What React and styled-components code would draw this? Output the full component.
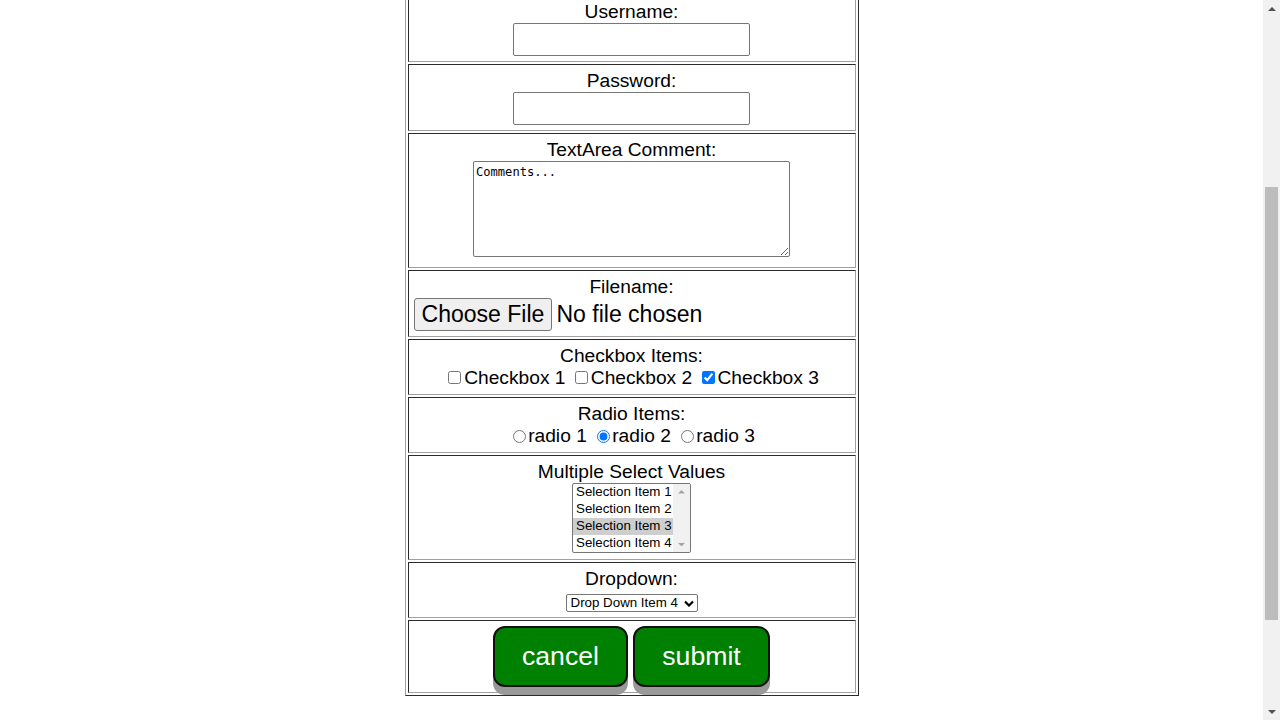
import React from "react";
import styled, { createGlobalStyle } from "styled-components";

const Global = createGlobalStyle`
  html, body { margin: 0; padding: 0; overflow: hidden; background: #fff; }
  body { font-family: "Liberation Sans", Arial, sans-serif; color: #000; }
`;

const Screen = styled.div`
  display: flex;
  width: 1280px;
  height: 720px;
  overflow: hidden;
`;

const Main = styled.main`
  flex: 1;
  overflow: hidden;
`;

const Table = styled.table`
  width: 454px;
  margin: -8px auto 0;
  border-spacing: 2px;
  border-style: solid;
  border-width: 1px;
  border-color: #a0a0a0 #2b2b2b #2b2b2b #a0a0a0;
  font-size: 19.2px;
`;

const Cell = styled.td`
  padding: 5px;
  text-align: center;
  border-style: solid;
  border-width: 1px;
  border-color: #2b2b2b #a0a0a0 #a0a0a0 #2b2b2b;
  line-height: 22px;
`;

const Label = styled.div`
  height: 22px;
  line-height: 22px;
`;

const FieldRow = styled.div`
  display: flex;
  justify-content: ${(p) => p.$align || "center"};
  align-items: ${(p) => p.$items || "flex-start"};
  gap: ${(p) => p.$gap || 0}px;
  padding-bottom: ${(p) => p.$pb || 0}px;
  height: ${(p) => (p.$h ? `${p.$h}px` : "auto")};
`;

const TextInput = styled.input`
  box-sizing: border-box;
  width: 237px;
  height: 33px;
  border: 1px solid #767676;
  border-radius: 2px;
  padding: 1px 2px;
  font-family: "Liberation Sans", Arial, sans-serif;
  font-size: 23px;
  background: #fff;
  outline: none;
`;

const TextArea = styled.textarea`
  box-sizing: border-box;
  width: 317px;
  height: 96px;
  border: 1px solid #767676;
  border-radius: 2px;
  padding: 3px 2px 2px;
  font-family: "DejaVu Sans Mono", monospace;
  font-size: 12.1px;
  line-height: 15px;
  color: #000;
  margin: 0;
  outline: none;
`;

const FileButton = styled.button`
  box-sizing: border-box;
  height: 33px;
  padding: 0 7px;
  margin: 0 4px 0 0;
  border: 1px solid #767676;
  border-radius: 3px;
  background: #efefef;
  color: #000;
  font-family: "Liberation Sans", Arial, sans-serif;
  font-size: 23.04px;
  line-height: 31px;
`;

const FileText = styled.span`
  font-size: 23.04px;
  line-height: 33px;
`;

const ChoiceLine = styled.div`
  height: 22px;
  line-height: 22px;
  white-space: nowrap;
`;

const Check = styled.input`
  width: 13px;
  height: 13px;
  margin: ${(p) => (p.type === "radio" ? "0 2px 0 5px" : "0 3px 0 4px")};
  vertical-align: ${(p) => (p.type === "radio" ? "-1px" : "0")};
  accent-color: #0075ff;
`;

const ListBox = styled.div`
  box-sizing: border-box;
  width: 119px;
  height: 70px;
  margin-bottom: 1px;
  border: 1px solid #767676;
  border-radius: 2px;
  display: flex;
  overflow: hidden;
  background: #fff;
`;

const Options = styled.div`
  flex: 1;
  display: flex;
  flex-direction: column;
  text-align: left;
`;

const Option = styled.div`
  height: 17px;
  line-height: 16px;
  padding-left: 3px;
  font-size: 13.33px;
  white-space: nowrap;
  background: ${(p) => (p.$selected ? "#cecece" : "transparent")};
`;

const MiniBar = styled.div`
  width: 17px;
  background: #f1f1f1;
  display: flex;
  flex-direction: column;
  justify-content: space-between;
  align-items: center;
  padding: 6px 0;
`;

const DropBox = styled.div`
  box-sizing: border-box;
  width: 132px;
  height: 18px;
  border: 1px solid #767676;
  border-radius: 2px;
  display: flex;
  align-items: center;
  justify-content: space-between;
  padding: 0 3px 0 4px;
  font-size: 13.33px;
  line-height: 16px;
  background: #fff;
`;

const ActionButton = styled.button`
  box-sizing: border-box;
  height: 61px;
  width: ${(p) => p.$w}px;
  padding: 0;
  background: #008000;
  color: #fff;
  border: 2px solid #111;
  border-radius: 12px;
  font-family: "Liberation Sans", Arial, sans-serif;
  font-size: 26.67px;
  box-shadow: 0 8px #999;
  cursor: pointer;
`;

const ScrollBar = styled.aside`
  width: 17px;
  background: #f1f1f1;
  display: flex;
  flex-direction: column;
`;

const ArrowBox = styled.div`
  height: 17px;
  display: flex;
  align-items: center;
  justify-content: center;
`;

const Track = styled.div`
  flex: 1;
  display: flex;
  flex-direction: column;
  align-items: center;
`;

const Thumb = styled.div`
  width: 13px;
  background: #bcbcbc;
  margin-top: ${(p) => p.$offset}px;
  height: ${(p) => p.$size}px;
`;

const Tri = ({ up, size = 8, color = "#505050" }) => (
  <svg width={size} height={size / 2} viewBox="0 0 8 4">
    {up ? <polygon points="0,4 8,4 4,0" fill={color} /> : <polygon points="0,0 8,0 4,4" fill={color} />}
  </svg>
);

const Chevron = () => (
  <svg width="10" height="7" viewBox="0 0 10 7">
    <polyline points="1,1.5 5,5.5 9,1.5" fill="none" stroke="#000" strokeWidth="2.2" />
  </svg>
);

export default function App() {
  return (
    <>
      <Global />
      <Screen>
        <Main>
          <form onSubmit={(e) => e.preventDefault()}>
            <Table>
              <tbody>
                <tr>
                  <Cell>
                    <Label>Username:</Label>
                    <FieldRow>
                      <TextInput type="text" name="username" />
                    </FieldRow>
                  </Cell>
                </tr>
                <tr>
                  <Cell>
                    <Label>Password:</Label>
                    <FieldRow>
                      <TextInput type="password" name="password" />
                    </FieldRow>
                  </Cell>
                </tr>
                <tr>
                  <Cell>
                    <Label>TextArea Comment:</Label>
                    <FieldRow $pb={5}>
                      <TextArea name="comments" defaultValue="Comments..." />
                    </FieldRow>
                  </Cell>
                </tr>
                <tr>
                  <Cell>
                    <Label>Filename:</Label>
                    <FieldRow $align="flex-start" $items="center">
                      <FileButton type="button">Choose File</FileButton>
                      <FileText>No file chosen</FileText>
                    </FieldRow>
                  </Cell>
                </tr>
                <tr>
                  <Cell>
                    <Label>Checkbox Items:</Label>
                    <ChoiceLine>
                      <Check type="checkbox" />Checkbox 1{" "}
                      <Check type="checkbox" />Checkbox 2{" "}
                      <Check type="checkbox" defaultChecked />Checkbox 3
                    </ChoiceLine>
                  </Cell>
                </tr>
                <tr>
                  <Cell>
                    <Label>Radio Items:</Label>
                    <ChoiceLine>
                      <Check type="radio" name="r" />radio 1{" "}
                      <Check type="radio" name="r" defaultChecked />radio 2{" "}
                      <Check type="radio" name="r" />radio 3
                    </ChoiceLine>
                  </Cell>
                </tr>
                <tr>
                  <Cell>
                    <Label>Multiple Select Values</Label>
                    <FieldRow>
                      <ListBox>
                        <Options>
                          <Option>Selection Item 1</Option>
                          <Option>Selection Item 2</Option>
                          <Option $selected>Selection Item 3</Option>
                          <Option>Selection Item 4</Option>
                        </Options>
                        <MiniBar>
                          <Tri up size={7} color="#a3a3a3" />
                          <Tri size={7} color="#a3a3a3" />
                        </MiniBar>
                      </ListBox>
                    </FieldRow>
                  </Cell>
                </tr>
                <tr>
                  <Cell>
                    <Label>Dropdown:</Label>
                    <FieldRow $items="flex-end" $h={22}>
                      <DropBox>
                        <span>Drop Down Item 4</span>
                        <Chevron />
                      </DropBox>
                    </FieldRow>
                  </Cell>
                </tr>
                <tr>
                  <Cell>
                    <FieldRow $gap={5}>
                      <ActionButton type="button" $w={135}>cancel</ActionButton>
                      <ActionButton type="submit" $w={137}>submit</ActionButton>
                    </FieldRow>
                  </Cell>
                </tr>
              </tbody>
            </Table>
          </form>
        </Main>
        <ScrollBar>
          <ArrowBox>
            <Tri up />
          </ArrowBox>
          <Track>
            <Thumb $offset={170} $size={433} />
          </Track>
          <ArrowBox>
            <Tri />
          </ArrowBox>
        </ScrollBar>
      </Screen>
    </>
  );
}
